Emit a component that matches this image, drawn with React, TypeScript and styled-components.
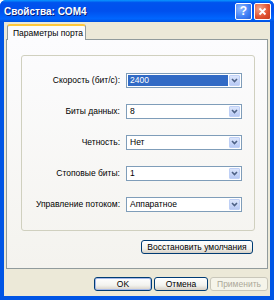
import React from "react";
import styled, { createGlobalStyle } from "styled-components";

const Global = createGlobalStyle`
  html, body { margin: 0; padding: 0; background: #ffffff; }
  body { font-family: "Liberation Sans", Arial, sans-serif; }
`;

const Window = styled.div`
  width: 274px;
  height: 300px;
  box-sizing: border-box;
  display: flex;
  flex-direction: column;
  background: #0055e5;
  border-radius: 6px 6px 0 0;
  overflow: hidden;
`;

const TitleBar = styled.div`
  height: 22px;
  flex: none;
  display: flex;
  align-items: center;
  padding: 0 3px 0 4px;
  background: linear-gradient(
    #0997ff 0%,
    #0053ee 12%,
    #0050ee 50%,
    #0066ff 85%,
    #0050e0 100%
  );
`;

const Title = styled.div`
  flex: 1;
  color: #ffffff;
  font-weight: bold;
  font-size: 10px;
  text-shadow: 1px 1px 0 #0a1e78;
`;

const CaptionButton = styled.div<{ $close?: boolean }>`
  width: 15px;
  height: 15px;
  margin-left: 2px;
  border: 1px solid #ffffff;
  border-radius: 2px;
  display: flex;
  align-items: center;
  justify-content: center;
  color: #ffffff;
  font-weight: bold;
  font-size: 12px;
  background: ${(p) =>
    p.$close
      ? "radial-gradient(circle at 30% 30%, #f4a48a, #e0502f 60%, #c43a1c)"
      : "radial-gradient(circle at 30% 30%, #8fb8ff, #3f7ff5 60%, #2660d8)"};
`;

const Client = styled.div`
  flex: 1;
  margin: 0 4px 4px 4px;
  background: #ece9d8;
  display: flex;
  flex-direction: column;
  padding: 2px 2px 0 2px;
`;

const TabStrip = styled.div`
  display: flex;
  padding-left: 1px;
  position: relative;
  z-index: 1;
  margin-bottom: -1px;
`;

const Tab = styled.div`
  width: 79px;
  height: 16px;
  box-sizing: border-box;
  border: 1px solid #919b9c;
  border-bottom: none;
  border-top: 2px solid #ffc83c;
  border-radius: 3px 3px 0 0;
  background: #fcfcfe;
  font-size: 8.5px;
  color: #000;
  padding: 2px 0 0 5px;
  white-space: nowrap;
`;

const Panel = styled.div`
  height: 230px;
  box-sizing: border-box;
  border: 1px solid #919b9c;
  background: linear-gradient(#fcfcfe, #f4f3ee);
  padding: 15px 12px 0 14px;
  display: flex;
  flex-direction: column;
`;

const GroupBox = styled.div`
  height: 176px;
  box-sizing: border-box;
  border: 1px solid #d0d0bf;
  border-radius: 3px;
  padding: 17px 12px 0 0;
  display: grid;
  grid-template-columns: 1fr 116px;
  grid-auto-rows: 15px;
  column-gap: 6px;
  row-gap: 16px;
`;

const Label = styled.div`
  font-size: 8.5px;
  color: #000;
  text-align: right;
  line-height: 15px;
  white-space: nowrap;
`;

const Combo = styled.div`
  box-sizing: border-box;
  border: 1px solid #7f9db9;
  background: #ffffff;
  display: flex;
  padding: 1px;
`;

const ComboValue = styled.div<{ $selected?: boolean }>`
  flex: 1;
  font-size: 8.5px;
  line-height: 11px;
  padding-left: 2px;
  margin-right: 1px;
  color: ${(p) => (p.$selected ? "#ffffff" : "#000000")};
  background: ${(p) => (p.$selected ? "#316ac5" : "transparent")};
`;

const ComboButton = styled.div`
  width: 11px;
  box-sizing: border-box;
  border: 1px solid #bfd0f6;
  border-radius: 1px;
  background: linear-gradient(#dce6fc, #b7c9f4);
  display: flex;
  align-items: center;
  justify-content: center;
`;

const Actions = styled.div<{ $pad?: string }>`
  display: flex;
  justify-content: flex-end;
  gap: 2px;
  padding: ${(p) => p.$pad || "0"};
`;

const Button = styled.div<{ $w: number; $default?: boolean; $disabled?: boolean }>`
  width: ${(p) => p.$w}px;
  height: 14px;
  box-sizing: border-box;
  border: 1px solid ${(p) => (p.$disabled ? "#c9c7ba" : "#003c74")};
  border-radius: 3px;
  background: ${(p) =>
    p.$disabled ? "#f5f4ea" : "linear-gradient(#ffffff, #f3f3ef 60%, #d6d0c5)"};
  box-shadow: ${(p) =>
    p.$default ? "inset 0 0 0 1px #a6b9e8" : "none"};
  font-size: 8.5px;
  line-height: 12px;
  text-align: center;
  white-space: nowrap;
  color: ${(p) => (p.$disabled ? "#aca899" : "#000")};
`;

const Chevron = () => (
  <svg width="7" height="5" viewBox="0 0 7 5">
    <path d="M1 1 L3.5 3.5 L6 1" stroke="#4d6185" strokeWidth="1.6" fill="none" />
  </svg>
);

const rows = [
  { label: "Скорость (бит/с):", value: "2400", selected: true },
  { label: "Биты данных:", value: "8" },
  { label: "Четность:", value: "Нет" },
  { label: "Стоповые биты:", value: "1" },
  { label: "Управление потоком:", value: "Аппаратное" },
];

export default function App() {
  return (
    <>
      <Global />
      <Window>
        <TitleBar>
          <Title>Свойства: COM4</Title>
          <CaptionButton>?</CaptionButton>
          <CaptionButton $close>
            <svg width="9" height="9" viewBox="0 0 9 9">
              <path d="M1.5 1.5 L7.5 7.5 M7.5 1.5 L1.5 7.5" stroke="#fff" strokeWidth="1.8" />
            </svg>
          </CaptionButton>
        </TitleBar>
        <Client>
          <TabStrip>
            <Tab>Параметры порта</Tab>
          </TabStrip>
          <Panel>
            <GroupBox>
              {rows.map((r) => (
                <React.Fragment key={r.label}>
                  <Label>{r.label}</Label>
                  <Combo>
                    <ComboValue $selected={r.selected}>{r.value}</ComboValue>
                    <ComboButton>
                      <Chevron />
                    </ComboButton>
                  </Combo>
                </React.Fragment>
              ))}
            </GroupBox>
            <Actions $pad="9px 2px 0 0">
              <Button $w={112}>Восстановить умолчания</Button>
            </Actions>
          </Panel>
          <Actions $pad="8px 0 0 0">
            <Button $w={58} $default>
              OK
            </Button>
            <Button $w={54}>Отмена</Button>
            <Button $w={58} $disabled>
              Применить
            </Button>
          </Actions>
        </Client>
      </Window>
    </>
  );
}
